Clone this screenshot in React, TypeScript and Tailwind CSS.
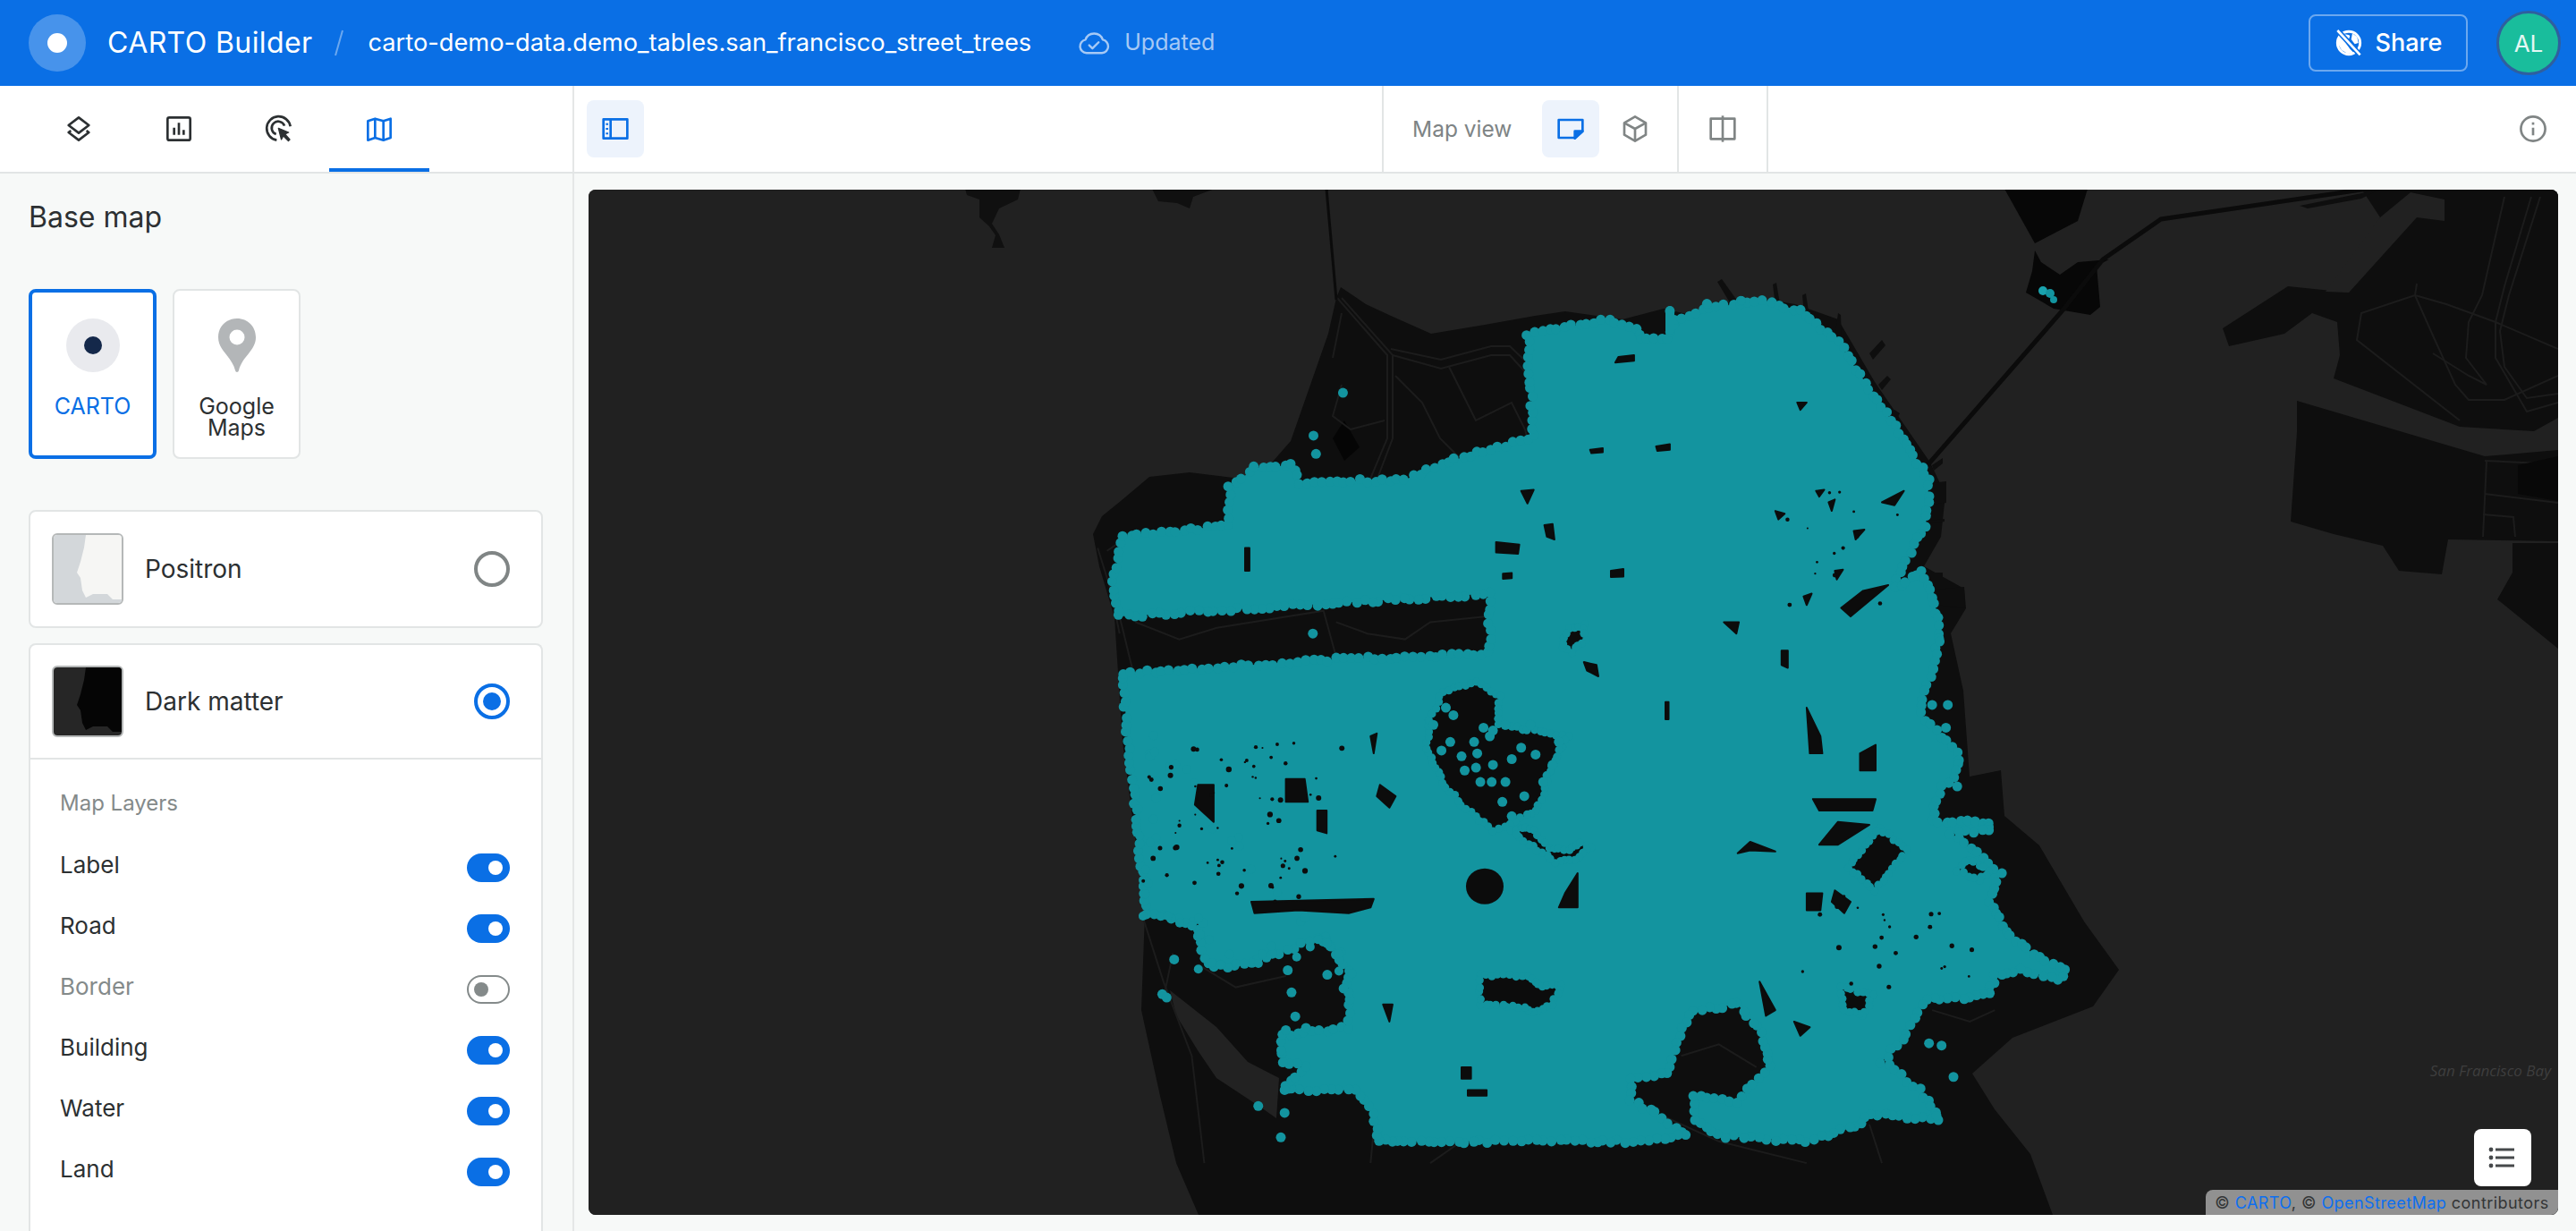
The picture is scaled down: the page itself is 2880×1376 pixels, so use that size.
const BLUE = '#0a6fe5';
const TEAL = '#13949f';
const LAND = '#0e0e0e';
const ROAD = '#1c1c1c';
const HOLE = '#0c0c0c';

// zoom coords of the city -> page coords
const z = (x: number, y: number): [number, number] => [1150 + x * 0.7015, 300 + y * 0.6378];
const toPts = (a: number[]) => {
  const out: string[] = [];
  for (let i = 0; i < a.length; i += 2) {
    const [x, y] = z(a[i], a[i + 1]);
    out.push(`${x.toFixed(1)},${y.toFixed(1)}`);
  }
  return out.join(' ');
};

let seed = 17;
const rnd = () => {
  seed = (seed * 1664525 + 1013904223) % 4294967296;
  return seed / 4294967296;
};

// dots along a closed outline, for the bubbly edge of the tree points
const bubbles = (poly: number[], step: number, jitter: number) => {
  const dots: [number, number][] = [];
  for (let i = 0; i < poly.length; i += 2) {
    const a = z(poly[i], poly[i + 1]);
    const j = (i + 2) % poly.length;
    const b = z(poly[j], poly[j + 1]);
    const len = Math.hypot(b[0] - a[0], b[1] - a[1]);
    const n = Math.ceil(len / step);
    for (let k = 0; k < n; k++) {
      const t = k / n;
      dots.push([a[0] + (b[0] - a[0]) * t + (rnd() - 0.5) * jitter, a[1] + (b[1] - a[1]) * t + (rnd() - 0.5) * jitter]);
    }
  }
  return dots;
};

const cityOutline = [
  795, 115, 925, 90, 970, 105, 975, 125, 1020, 125, 1030, 90, 1085, 70, 1170, 55, 1230, 75, 1290, 130, 1340, 210, 1400, 310,
  1435, 370, 1430, 450, 1400, 510, 1380, 560, 1425, 530, 1445, 590, 1450, 650, 1440, 700, 1420, 780, 1480, 850, 1480, 880,
  1450, 920, 1440, 970, 1530, 970, 1530, 985, 1470, 990, 1550, 1060, 1530, 1110, 1565, 1170, 1600, 1200, 1654, 1230, 1640, 1245,
  1580, 1230, 1540, 1240, 1530, 1270,
  1490, 1280, 1430, 1280, 1400, 1340, 1360, 1390, 1420, 1440, 1450, 1490, 1400, 1490, 1340, 1480, 1330, 1500, 1240, 1530,
  1100, 1520, 1060, 1490, 1060, 1450, 1130, 1460, 1180, 1400, 1170, 1340, 1130, 1290, 1060, 1300, 1040, 1330, 1020, 1410,
  960, 1420, 960, 1460, 1000, 1480, 1050, 1520, 950, 1530, 860, 1530, 720, 1530, 600, 1530, 560, 1530, 550, 1480, 520, 1440,
  420, 1440, 410, 1430, 440, 1400, 405, 1390, 405, 1345, 510, 1330, 510, 1230, 470, 1170, 400, 1200, 330, 1225, 285, 1220,
  270, 1170, 275, 1150, 190, 1130, 180, 1060, 150, 730, 150, 710, 490, 685, 735, 675, 735, 570, 145, 610, 135, 550, 150, 470,
  320, 450, 320, 385, 360, 350, 420, 345, 430, 375, 600, 370, 680, 335, 805, 295,
];

const edgeDots = bubbles(cityOutline, 9, 4);
const swDots = bubbles([190, 830, 190, 1130, 275, 1150, 285, 1220, 400, 1200, 470, 1170, 510, 1230], 14, 22);

const bigHoles = [
  [660, 740, 715, 725, 750, 750, 750, 800, 860, 820, 830, 880, 820, 920, 810, 950, 740, 985, 690, 940, 660, 900, 635, 840, 640, 790],
  [860, 630, 885, 625, 888, 650, 865, 672, 850, 665],
  [770, 985, 800, 980, 830, 1015, 860, 1020, 880, 1005, 895, 1015, 870, 1035, 840, 1040, 810, 1020],
  [720, 1238, 795, 1240, 820, 1260, 850, 1255, 835, 1290, 805, 1305, 790, 1295, 720, 1290],
  [1355, 980, 1400, 1020, 1350, 1090, 1305, 1050],
  [1295, 1260, 1345, 1275, 1330, 1310, 1300, 1300],
  [1500, 1035, 1530, 1055, 1515, 1075, 1480, 1055],
];

const holes = [
  [345, 490, 352, 490, 352, 530, 345, 530],
  [745, 480, 782, 484, 780, 500, 745, 498],
  [940, 155, 965, 152, 965, 162, 935, 165],
  [895, 318, 915, 315, 915, 322, 897, 324],
  [1000, 312, 1022, 308, 1022, 318, 1002, 320],
  [785, 390, 805, 388, 795, 412],
  [822, 450, 835, 448, 838, 475, 826, 470],
  [928, 530, 948, 527, 948, 540, 928, 541],
  [756, 535, 770, 534, 770, 543, 756, 544],
  [885, 690, 905, 695, 908, 715, 890, 705],
  [1015, 760, 1020, 760, 1020, 790, 1015, 790],
  [1240, 770, 1262, 820, 1265, 850, 1245, 850],
  [1325, 850, 1350, 835, 1350, 880, 1325, 880],
  [1130, 1025, 1150, 1005, 1190, 1022, 1150, 1020],
  [875, 1120, 845, 1120, 855, 1095, 875, 1060],
  [410, 895, 440, 895, 445, 935, 410, 935],
  [270, 905, 295, 905, 295, 970, 265, 940],
  [560, 905, 585, 925, 575, 945, 555, 925],
  [460, 950, 475, 950, 475, 990, 460, 985],
  [355, 1110, 550, 1105, 545, 1120, 510, 1130, 430, 1125, 360, 1130],
  [1220, 1320, 1245, 1330, 1230, 1345],
  [1260, 1010, 1290, 970, 1340, 975, 1290, 1010],
  [1250, 930, 1350, 930, 1345, 950, 1260, 950],
  [1330, 565, 1370, 555, 1310, 610, 1295, 595],
  [1200, 670, 1210, 670, 1210, 700, 1200, 695],
  [1125, 620, 1132, 620, 1128, 640, 1108, 620],
  [1240, 1095, 1265, 1095, 1262, 1125, 1240, 1125],
  [1285, 1090, 1310, 1110, 1300, 1130, 1280, 1110],
  [1165, 1250, 1190, 1300, 1175, 1310],
  [690, 1400, 705, 1400, 705, 1420, 690, 1420],
  [700, 1440, 730, 1440, 730, 1450, 700, 1450],
  [565, 1290, 580, 1290, 575, 1320],
  [545, 820, 555, 815, 550, 850],
  [1225, 235, 1240, 235, 1230, 248],
  [1255, 390, 1268, 388, 1260, 400],
  [1190, 425, 1205, 430, 1195, 440],
  [1315, 460, 1332, 458, 1318, 475],
  [1285, 530, 1298, 528, 1288, 545],
  [1235, 575, 1248, 570, 1240, 590],
  [1275, 410, 1285, 405, 1280, 425],
  [1360, 410, 1395, 390, 1380, 415],
];

const specks: [number, number, number][] = [];
for (let i = 0; i < 70; i++) {
  specks.push([180 + rnd() * 320, 830 + rnd() * 290, 1 + rnd() * 2.2]);
}
for (let i = 0; i < 14; i++) {
  specks.push([1180 + rnd() * 230, 360 + rnd() * 240, 1 + rnd() * 1.5]);
}
for (let i = 0; i < 24; i++) {
  specks.push([1230 + rnd() * 290, 1100 + rnd() * 160, 1 + rnd() * 2]);
}

const strayDots = [
  501, 218, 454, 293, 458, 325, 453, 640, 232, 1211, 213, 1272, 220, 1278, 413, 1230, 419, 1269, 425, 1311, 410, 1335, 442, 1331,
  476, 1238, 502, 1262, 366, 1468, 408, 1480, 402, 1523, 408, 1440, 1452, 654, 1474, 1417, 1435, 1358, 1455, 1362, 1447, 1485,
  1081, 62, 1135, 57, 1022, 75, 665, 770, 677, 783, 645, 800, 672, 830, 658, 845, 690, 855, 710, 830, 735, 820, 715, 850, 740, 870,
  695, 880, 713, 875, 720, 900, 738, 900, 770, 860, 785, 840, 808, 852, 760, 900, 790, 925, 755, 935, 770, 960, 845, 830, 835, 870,
  820, 900, 740, 810, 725, 805, 760, 800, 800, 800, 1462, 805, 1480, 908, 1440, 765, 1465, 765,
];

const cityRoads = [
  [145, 610, 165, 700],
  [170, 620, 240, 650, 300, 630, 470, 600, 490, 680],
  [490, 620, 540, 640, 600, 650, 640, 620, 730, 610],
  [180, 1130, 215, 1250, 260, 1380, 280, 1568],
  [230, 1200, 215, 1280],
  [1000, 1480, 1100, 1530, 1240, 1568],
  [1340, 1500, 1360, 1568],
  [550, 1510, 545, 1568],
  [850, 1250, 800, 1330],
  [640, 1568, 690, 1530],
  [1040, 1380, 1100, 1360, 1160, 1400],
  [1440, 1300, 1500, 1320, 1540, 1300],
  [270, 1220, 330, 1260, 410, 1240],
  [110, 490, 130, 560, 145, 640],
  [125, 495, 145, 480],
];

const Stroked = ({ size = 32, color, children }: { size?: number; color: string; children: React.ReactNode }) => (
  <svg width={size} height={size} viewBox="0 0 24 24" fill="none" stroke={color} strokeWidth="2" strokeLinejoin="round">
    {children}
  </svg>
);

const MapCanvas = () => (
  <svg viewBox="658 212 2202 1146" className="absolute inset-0 h-full w-full">
    <rect x="658" y="212" width="2202" height="1146" fill="#212121" />
    {/* north shore bits */}
    <polygon fill="#101010" points="1079,211 1141,211 1138,223 1117,233 1109,250 1117,262 1123,277 1109,277 1113,263 1106,253 1095,243 1095,223 1081,218" />
    <polygon fill="#101010" points="1288,211 1358,211 1334,220 1330,233 1316,227 1295,225" />
    {/* city land */}
    <polygon
      fill={LAND}
      points="1494,333 1499,321 1527,340 1555,353 1600,373 1660,363 1716,353 1750,348 1814,357 1860,345 1890,352 1930,338 1965,333 2007,340 2055,357 2096,427 2158,517 2175,553 2170,600 2151,633 2196,658 2198,680 2181,708 2195,772 2202,868 2237,861 2241,912 2280,945 2330,1030 2369,1084 2340,1125 2250,1160 2205,1200 2230,1240 2270,1290 2295,1358 1340,1358 1315,1300 1297,1225 1276,1129 1280,1021 1255,829 1246,690 1229,633 1222,597 1232,577 1253,560 1285,533 1330,528 1387,535 1422,517 1443,493 1464,433 1485,373"
    />
    {/* piers */}
    <g fill={LAND}>
      <polygon points="1920,315 1925,312 1945,340 1938,345" />
      <polygon points="1982,318 1986,316 1990,340 1985,342" />
      <polygon points="2015,330 2019,328 2024,362 2018,362" />
      <polygon points="2055,350 2058,352 2060,410 2050,385" />
      <polygon points="2090,395 2104,380 2108,386 2094,402" />
      <polygon points="2100,430 2110,420 2114,424 2104,436" />
      <polygon points="2110,470 2118,458 2124,462 2116,478" />
      <polygon points="2160,520 2172,512 2172,518 2162,526" />
      <polygon points="2158,540 2176,538 2176,562 2158,564" />
      <polygon points="2158,582 2174,580 2174,583 2158,585" />
      <polygon points="2150,640 2172,640 2172,665 2150,665" />
      <polygon points="2155,660 2196,656 2197,680 2155,675" />
    </g>
    {/* lake and parks */}
    <polygon fill="#222222" points="1308,1107 1360,1148 1395,1187 1430,1205 1427,1250 1410,1238 1360,1205 1339,1174 1315,1135" />
    <polygon fill="#050505" points="1490,490 1503,470 1520,500 1503,515" />
    {cityRoads.map((r, i) => (
      <polyline key={i} points={toPts(r)} fill="none" stroke={ROAD} strokeWidth="2" />
    ))}
    <g fill="none" stroke={ROAD} strokeWidth="2">
      <polyline points="1495,333 1551,397 1551,490 1530,540" />
      <polyline points="1500,333 1557,397 1557,490 1538,540" />
      <polyline points="1555,390 1611,402 1667,387 1688,387 1709,407" />
      <polyline points="1557,397 1611,412 1667,397 1688,397 1709,420" />
      <polyline points="1490,400 1500,350" />
      <polyline points="1500,430 1490,465 1510,480 1548,470" />
      <polyline points="1560,420 1590,450 1610,490 1630,510 1630,530" />
      <polyline points="1620,410 1640,450 1650,470 1690,450 1705,480 1710,500" />
    </g>
    {/* golden gate bridge */}
    <line x1="1483" y1="211" x2="1494" y2="335" stroke="#0b0b0b" strokeWidth="3" />
    {/* treasure island and yerba buena */}
    <polygon fill="#070707" points="2241,211 2334,211 2323,247 2275,272" />
    <polygon fill="#070707" points="2275,280 2272,303 2265,327 2296,345 2337,352 2348,343 2344,297 2358,290 2323,293 2303,307 2282,293" />
    <polyline points="2155,520 2306,347 2351,290 2416,245 2647,211" fill="none" stroke="#0b0b0b" strokeWidth="5" />
    {/* east bay */}
    <polygon fill={LAND} points="2640,211 2860,211 2860,467 2833,482 2750,477 2609,423 2578,417 2609,423 2616,397 2613,360 2585,350 2554,373 2492,387 2485,367 2558,320 2626,327 2661,243" />
    <polygon fill="#212121" points="2661,243 2695,215 2733,223 2733,247 2702,243 2626,327 2600,326" />
    <polygon fill={LAND} points="2571,230 2660,212 2640,222 2580,233" />
    <polygon fill={LAND} points="2568,448 2778,510 2860,503 2860,605 2737,603 2730,642 2682,638 2664,610 2609,597 2561,583 2568,483" />
    <polygon fill={LAND} points="2809,607 2860,607 2860,725 2792,670 2809,640" />
    <g fill="none" stroke={ROAD} strokeWidth="2">
      <polyline points="2800,220 2775,330 2760,360 2757,400 2780,430 2760,420 2720,395" />
      <polyline points="2830,220 2800,320 2790,360 2790,400 2825,460 2860,450" />
      <polyline points="2840,220 2805,330 2795,370 2800,410 2825,445 2860,440" />
      <polyline points="2700,330 2735,340 2790,360 2860,390" />
      <polyline points="2700,330 2640,350 2635,380 2750,470" />
      <polyline points="2702,317 2700,330 2720,375 2745,430 2760,447 2800,447 2860,420" />
      <polyline points="2780,515 2776,600" />
      <polyline points="2778,515 2840,518 2860,560" />
      <polyline points="2778,552 2860,562" />
      <polyline points="2776,575 2810,578 2812,600" />
    </g>
    <polygon fill="#080808" points="2815,520 2860,510 2860,560 2815,552" />
    {/* street trees */}
    <polygon fill={TEAL} points={toPts(cityOutline)} />
    {edgeDots.map((d, i) => (
      <circle key={i} cx={d[0]} cy={d[1]} r="5.5" fill={TEAL} />
    ))}
    {swDots.map((d, i) => (
      <circle key={i} cx={d[0]} cy={d[1]} r="5" fill={TEAL} />
    ))}
    {bigHoles.map((h, i) => (
      <polygon key={i} points={toPts(h)} fill={HOLE} />
    ))}
    {bigHoles.map((h) => bubbles(h, 7, 3)).flat().map((d, i) => (
      <circle key={i} cx={d[0]} cy={d[1]} r="4.5" fill={TEAL} />
    ))}
    {holes.map((h, i) => (
      <polygon key={i} points={toPts(h)} fill={HOLE} stroke={HOLE} strokeWidth="2" strokeLinejoin="round" />
    ))}
    <ellipse cx={z(727, 1083)[0]} cy={z(727, 1083)[1]} rx="21" ry="20" fill={HOLE} />
    {specks.map((s, i) => (
      <circle key={i} cx={z(s[0], s[1])[0]} cy={z(s[0], s[1])[1]} r={s[2]} fill={HOLE} />
    ))}
    {strayDots.map((_, i) =>
      i % 2 === 0 ? <circle key={i} cx={z(strayDots[i], strayDots[i + 1])[0]} cy={z(strayDots[i], strayDots[i + 1])[1]} r="5.5" fill={TEAL} /> : null,
    )}
    <circle cx="2284" cy="325" r="5" fill="#1aa3ae" />
    <circle cx="2292" cy="328" r="5" fill={TEAL} />
    <circle cx="2296" cy="335" r="4" fill={TEAL} />
    <rect x="1862" y="342" width="10" height="32" rx="5" fill={TEAL} />
    <circle cx="1909" cy="340" r="5" fill={TEAL} />
    <circle cx="1947" cy="336" r="5" fill={TEAL} />
    <text x="2852" y="1203" textAnchor="end" fontSize="17" fontStyle="italic" fontFamily="'Open Sans', sans-serif" fill="#3e3e3e">
      San Francisco Bay
    </text>
  </svg>
);

const Toggle = ({ on }: { on: boolean }) =>
  on ? (
    <div className="flex h-8 w-12 items-center justify-end rounded-full bg-[#0a6fe5] pr-2">
      <div className="h-4 w-4 rounded-full bg-white" />
    </div>
  ) : (
    <div className="flex h-8 w-12 items-center rounded-full border-2 border-[#848a8a] bg-white pl-[6px]">
      <div className="h-4 w-4 rounded-full bg-[#848a8a]" />
    </div>
  );

const LayerRow = ({ label, on = true }: { label: string; on?: boolean }) => (
  <div className="flex h-[68px] items-center justify-between">
    <span className={`mb-[7px] text-[26px] ${on ? 'text-[#2c3032]' : 'text-[#848a8a]'}`}>{label}</span>
    <Toggle on={on} />
  </div>
);

const Thumb = ({ sea, land }: { sea: string; land: string }) => (
  <div className="h-20 w-20 shrink-0 overflow-hidden rounded-md border-2 border-[#b5b8b8]">
    <svg width="76" height="76" viewBox="0 0 76 76">
      <rect width="76" height="76" fill={sea} />
      <polygon fill={land} points="36,0 76,0 76,72 66,72 60,66 44,66 36,70 32,62 30,48 26,42 30,30 34,14" />
    </svg>
  </div>
);

const TabIcon = ({ active, children }: { active?: boolean; children: React.ReactNode }) => (
  <div className={`flex h-full w-28 items-center justify-center border-b-4 pt-1 ${active ? 'border-[#0a6fe5]' : 'border-transparent'}`}>
    {children}
  </div>
);

export default function App() {
  return (
    <div className="flex h-[1376px] w-[2880px] flex-col overflow-hidden bg-[#f7f9f8] font-['Inter',sans-serif]">
      {/* header */}
      <header className="flex h-24 shrink-0 items-center bg-[#0a6fe5] pl-8 pr-[17px] text-white">
        <div className="flex h-16 w-16 items-center justify-center rounded-full bg-white/25">
          <div className="h-[22px] w-[22px] rounded-full bg-white" />
        </div>
        <span className="ml-[24px] text-[32px] tracking-[0.4px]">CARTO Builder</span>
        <svg width="12" height="30" viewBox="0 0 12 30" className="ml-[24px]">
          <line x1="10" y1="1" x2="2" y2="29" stroke="#ffffff" strokeOpacity="0.4" strokeWidth="2" />
        </svg>
        <span className="ml-[26px] text-[27.25px]">carto-demo-data.demo_tables.san_francisco_street_trees</span>
        <svg width="36" height="36" viewBox="0 0 24 24" fill="none" stroke="#a6c9f5" strokeWidth="1.6" strokeLinejoin="round" strokeLinecap="round" className="ml-[52px]">
          <path d="M6.5 19.5a5 5 0 0 1-.8-9.9A6.8 6.8 0 0 1 18.6 9.6a5 5 0 0 1-.6 9.9Z" />
          <path d="M8.5 13.7l2.4 2.4 4.6-4.6" />
        </svg>
        <span className="ml-4 text-[25px] text-[#a6c9f5]">Updated</span>
        <div className="ml-auto flex h-16 w-[178px] items-center justify-center gap-[14px] rounded-lg border-2 border-white/40">
          <svg width="32" height="32" viewBox="0 0 24 24" fill="none">
            <circle cx="12" cy="12" r="9.5" stroke="#fff" strokeWidth="2.2" />
            <path d="M6 6c3-2 6-1 7 0l-1 3-4 1 5 7 3 3-5 1-5-3-3-5-1-3Z" fill="#fff" />
            <path d="M15 4l4 3 1 5-3 1-3-4Z" fill="#fff" />
            <path d="M3.5 2.5L21 21.5" stroke="#0a6fe5" strokeWidth="4.5" />
            <path d="M2.5 1.5L21.5 22" stroke="#fff" strokeWidth="2" />
          </svg>
          <span className="text-[27px] font-medium">Share</span>
        </div>
        <div className="ml-[32px] flex h-[72px] w-[72px] items-center justify-center rounded-full border-[3px] border-[#2f5f9e] bg-[#19bd9c] text-[26px] text-[#e4f7f3]">
          AL
        </div>
      </header>

      {/* toolbar */}
      <div className="flex h-[98px] shrink-0 border-b-2 border-[#e2e5e5] bg-white">
        <div className="flex h-full w-[642px] shrink-0 border-r-2 border-[#e5e7e7] pl-8">
          <TabIcon>
            <Stroked color="#2c3032">
              <path d="M12 2.5L20.5 9 12 15.5 3.5 9Z" />
              <path d="M5.5 13.5L3.5 15 12 21.5 20.5 15 18.5 13.5" />
            </Stroked>
          </TabIcon>
          <TabIcon>
            <Stroked color="#2c3032">
              <rect x="2.5" y="2.5" width="19" height="19" rx="1.5" />
              <path d="M8 11v6M12 7v10M16 13v4" />
            </Stroked>
          </TabIcon>
          <TabIcon>
            <Stroked color="#2c3032">
              <path d="M10 21.5A10 10 0 1 1 21.5 10" />
              <path d="M9.5 16.500A5.500 5.500 0 1 1 16.500 9.500" />
              <path d="M11.500 11.500L20 15l-3 1.500 4 4.500-1.200 1.200-4.300-4.300-1.600 3Z" fill="#2c3032" strokeWidth="1" />
            </Stroked>
          </TabIcon>
          <TabIcon active>
            <Stroked color={BLUE}>
              <path d="M2.500 5.500L8.500 3.500 15.500 5.500 21.500 3.500V19.500L15.500 21.500 8.500 19.500 2.500 21.500Z" />
              <path d="M8.500 3.500V19.500M15.500 5.500V21.500" />
            </Stroked>
          </TabIcon>
        </div>
        <div className="grid min-w-0 flex-1 grid-cols-[1fr_auto_1fr]">
          <div className="flex items-start pl-[14px] pt-4">
            <div className="flex h-16 w-16 items-center justify-center rounded-lg bg-[#edf3fc]">
              <Stroked color={BLUE}>
                <rect x="2" y="4" width="20" height="16" />
                <path d="M8 4v16" />
                <path d="M4 8h2M4 12h2M4 16h2" strokeWidth="1.500" />
              </Stroked>
            </div>
          </div>
          <div className="flex h-24 w-[432px] items-center border-x-2 border-[#e2e5e5]">
            <div className="flex h-full w-[330px] items-center border-r-2 border-[#e2e5e5] pl-8">
              <span className="w-[145px] shrink-0 text-[24.5px] text-[#7e8485]">Map view</span>
              <div className="flex h-16 w-16 items-center justify-center rounded-lg bg-[#edf3fc]">
                <svg width="32" height="32" viewBox="0 0 24 24" fill="none" stroke={BLUE} strokeWidth="2" strokeLinejoin="round">
                  <path d="M2 4.500H22V14L15.500 19.500H2Z" />
                  <path d="M15.500 14H22L15.500 20Z" fill={BLUE} />
                </svg>
              </div>
              <div className="ml-2 flex h-16 w-16 items-center justify-center">
                <Stroked color="#808585">
                  <path d="M12 1.800L21 7V17L12 22.200 3 17V7Z" />
                  <path d="M3 7L12 12 21 7M12 12V22" />
                </Stroked>
              </div>
            </div>
            <div className="flex flex-1 items-center justify-center">
              <Stroked color="#808585">
                <rect x="2" y="3.500" width="20" height="17" />
                <path d="M12 1v22" />
              </Stroked>
            </div>
          </div>
          <div className="flex items-center justify-end pr-[32px]">
            <Stroked color="#808585">
              <circle cx="12" cy="12" r="10.200" />
              <path d="M12 11v6.500M12 6.500v2.200" />
            </Stroked>
          </div>
        </div>
      </div>

      <div className="flex min-h-0 flex-1">
        {/* sidebar */}
        <aside className="flex w-[642px] shrink-0 flex-col overflow-hidden border-r-2 border-[#e5e7e7] pl-8 pr-[33px] pt-[29px]">
          <h2 className="text-[32px] leading-10 text-[#2c3032]">Base map</h2>
          <div className="mt-[60px] flex gap-[18px]">
            <div className="flex h-[190px] w-[143px] flex-col items-center rounded-lg border-4 border-[#0a6fe5] bg-white pt-[29px]">
              <div className="flex h-[60px] w-[60px] items-center justify-center rounded-full bg-[#e9eaee]">
                <div className="h-5 w-5 rounded-full bg-[#14284a]" />
              </div>
              <span className="mt-[26px] text-[25px] leading-[24px] text-[#0a6fe5]">CARTO</span>
            </div>
            <div className="flex h-[190px] w-[143px] flex-col items-center rounded-lg border-2 border-[#e2e5e5] bg-white pt-[31px]">
              <svg width="42" height="60" viewBox="0 0 42 60">
                <path d="M21 0C9 0 0 9 0 21C0 36 15 42 19 58C19.500 60.500 22.500 60.500 23 58C27 42 42 36 42 21C42 9 33 0 21 0Z" fill="#b3b6b8" />
                <circle cx="21" cy="21" r="8.500" fill="#fff" />
              </svg>
              <span className="mt-[26px] text-center text-[25px] leading-[24px] text-[#2c3032]">
                Google
                <br />
                Maps
              </span>
            </div>
          </div>
          <div className="mt-[57px] flex h-[132px] items-center rounded-lg border-2 border-[#e2e5e5] bg-white pl-6 pr-[35px]">
            <Thumb sea="#d3d7da" land="#f6f6f4" />
            <span className="ml-6 text-[28px] text-[#2c3032]">Positron</span>
            <div className="ml-auto h-10 w-10 rounded-full border-4 border-[#808585]" />
          </div>
          <div className="mt-[17px] flex-1 rounded-t-lg border-2 border-b-0 border-[#e2e5e5] bg-white">
            <div className="flex h-[128px] items-center border-b-2 border-[#e2e5e5] pl-6 pr-[35px]">
              <Thumb sea="#262626" land="#050505" />
              <span className="ml-6 text-[28px] text-[#2c3032]">Dark matter</span>
              <div className="ml-auto flex h-10 w-10 items-center justify-center rounded-full border-4 border-[#0a6fe5]">
                <div className="h-5 w-5 rounded-full bg-[#0a6fe5]" />
              </div>
            </div>
            <div className="pl-[33px] pr-[35px] pt-[33px]">
              <div className="mb-[22px] text-[24px] leading-8 text-[#848a8a]">Map Layers</div>
              <LayerRow label="Label" />
              <LayerRow label="Road" />
              <LayerRow label="Border" on={false} />
              <LayerRow label="Building" />
              <LayerRow label="Water" />
              <LayerRow label="Land" />
            </div>
          </div>
        </aside>

        {/* map */}
        <main className="min-w-0 flex-1 pb-[18px] pl-4 pr-5 pt-[18px]">
          <div className="relative h-full w-full overflow-hidden rounded-lg bg-[#212121]">
            <MapCanvas />
            <div className="absolute bottom-8 right-[30px] flex h-16 w-16 items-center justify-center rounded-lg bg-white">
              <svg width="32" height="32" viewBox="0 0 32 32" fill="#46494b">
                <circle cx="3" cy="7" r="2.400" />
                <circle cx="3" cy="16" r="2.400" />
                <circle cx="3" cy="25" r="2.400" />
                <rect x="8" y="5.500" width="21" height="3" />
                <rect x="8" y="14.500" width="21" height="3" />
                <rect x="8" y="23.500" width="21" height="3" />
              </svg>
            </div>
            <div className="absolute bottom-0 right-0 flex h-7 w-[394px] items-center justify-center rounded-tl-lg bg-[#919191] text-[18px] tracking-[0.45px] text-[#333536]">
              <span>
                © <span className="text-[#0d6ff0]">CARTO</span>, © <span className="text-[#0d6ff0]">OpenStreetMap</span> contributors
              </span>
            </div>
          </div>
        </main>
      </div>
    </div>
  );
}
